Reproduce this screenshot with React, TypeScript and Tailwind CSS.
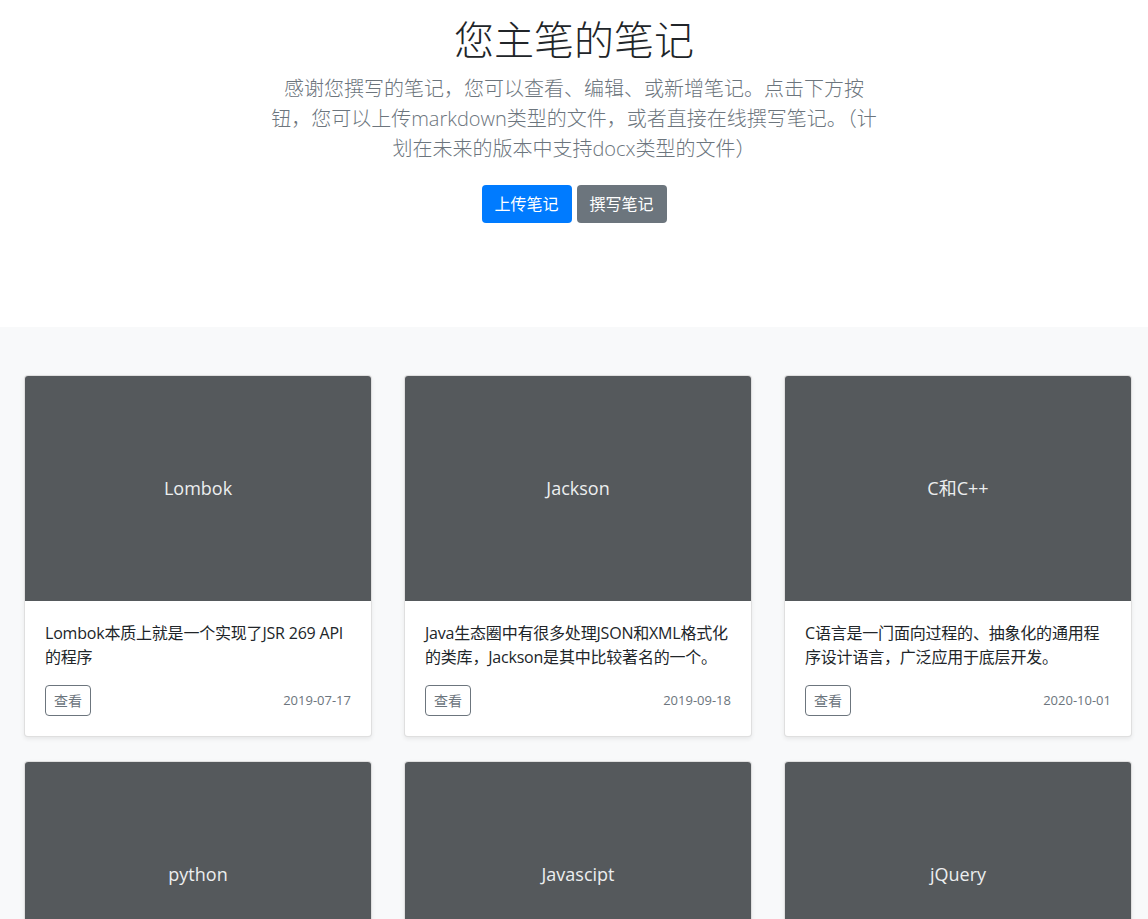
import React from "react";

const notes = [
  { title: "Lombok", desc: ["Lombok本质上就是一个实现了JSR 269 API", "的程序"], date: "2019-07-17" },
  { title: "Jackson", desc: ["Java生态圈中有很多处理JSON和XML格式化", "的类库，Jackson是其中比较著名的一个。"], date: "2019-09-18" },
  { title: "C和C++", desc: ["C语言是一门面向过程的、抽象化的通用程", "序设计语言，广泛应用于底层开发。"], date: "2020-10-01" },
  { title: "python", desc: ["Python是一种跨平台的计算机程序设计", "语言。"], date: "2020-10-02" },
  { title: "Javascipt", desc: ["JavaScript是一种具有函数优先的轻量级", "脚本语言。"], date: "2020-10-03" },
  { title: "jQuery", desc: ["jQuery是一个快速、简洁的JavaScript", "框架。"], date: "2020-10-04" },
];

const font = {
  fontFamily: '"Open Sans", "Noto Sans CJK SC", sans-serif',
};

function NoteCard({ title, desc, date }: { title: string; desc: string[]; date: string }) {
  return (
    <div className="mb-6 flex flex-col overflow-hidden rounded border border-black/[.125] bg-white shadow-[0_2px_4px_rgba(0,0,0,0.075)]">
      <div className="flex h-[225px] items-center justify-center bg-[#55595c] text-[18px] text-[#eceeef]">
        {title}
      </div>
      <div className="p-5">
        <p className="mb-4 whitespace-nowrap text-[16px] leading-6 tracking-[-0.2px] text-[#212529]">
          {desc.map((line, i) => (
            <React.Fragment key={i}>
              {i > 0 && <br />}
              {line}
            </React.Fragment>
          ))}
        </p>
        <div className="flex items-center justify-between">
          <button className="h-[31px] rounded border border-[#6c757d] px-2 text-[14px] text-[#6c757d]">
            查看
          </button>
          <small className="text-[13px] text-[#6c757d]">{date}</small>
        </div>
      </div>
    </div>
  );
}

export default function App() {
  return (
    <div style={font} className="min-h-screen bg-white">
      <section className="pt-[16px] pb-[104px] text-center">
        <h1 className="text-[40px] font-light leading-[1.2] text-[#212529]">您主笔的笔记</h1>
        <p className="mx-auto mt-[10px] max-w-[640px] text-[20px] font-light leading-[30px] text-[#6c757d]">
          感谢您撰写的笔记，您可以查看、编辑、或新增笔记。点击下方按
          <br />
          钮，您可以上传markdown类型的文件，或者直接在线撰写笔记。（计
          <br />
          划在未来的版本中支持docx类型的文件）
        </p>
        <div className="mt-[21px] flex justify-center gap-[5px]">
          <button className="h-[38px] w-[90px] rounded bg-[#007bff] text-[16px] text-white">上传笔记</button>
          <button className="h-[38px] w-[90px] rounded bg-[#6c757d] text-[16px] text-white">撰写笔记</button>
        </div>
      </section>
      <section className="bg-[#f8f9fa] pt-[48px] pl-6 pr-4">
        <div className="grid grid-cols-3 gap-x-8">
          {notes.map((n) => (
            <NoteCard key={n.title} {...n} />
          ))}
        </div>
      </section>
    </div>
  );
}
